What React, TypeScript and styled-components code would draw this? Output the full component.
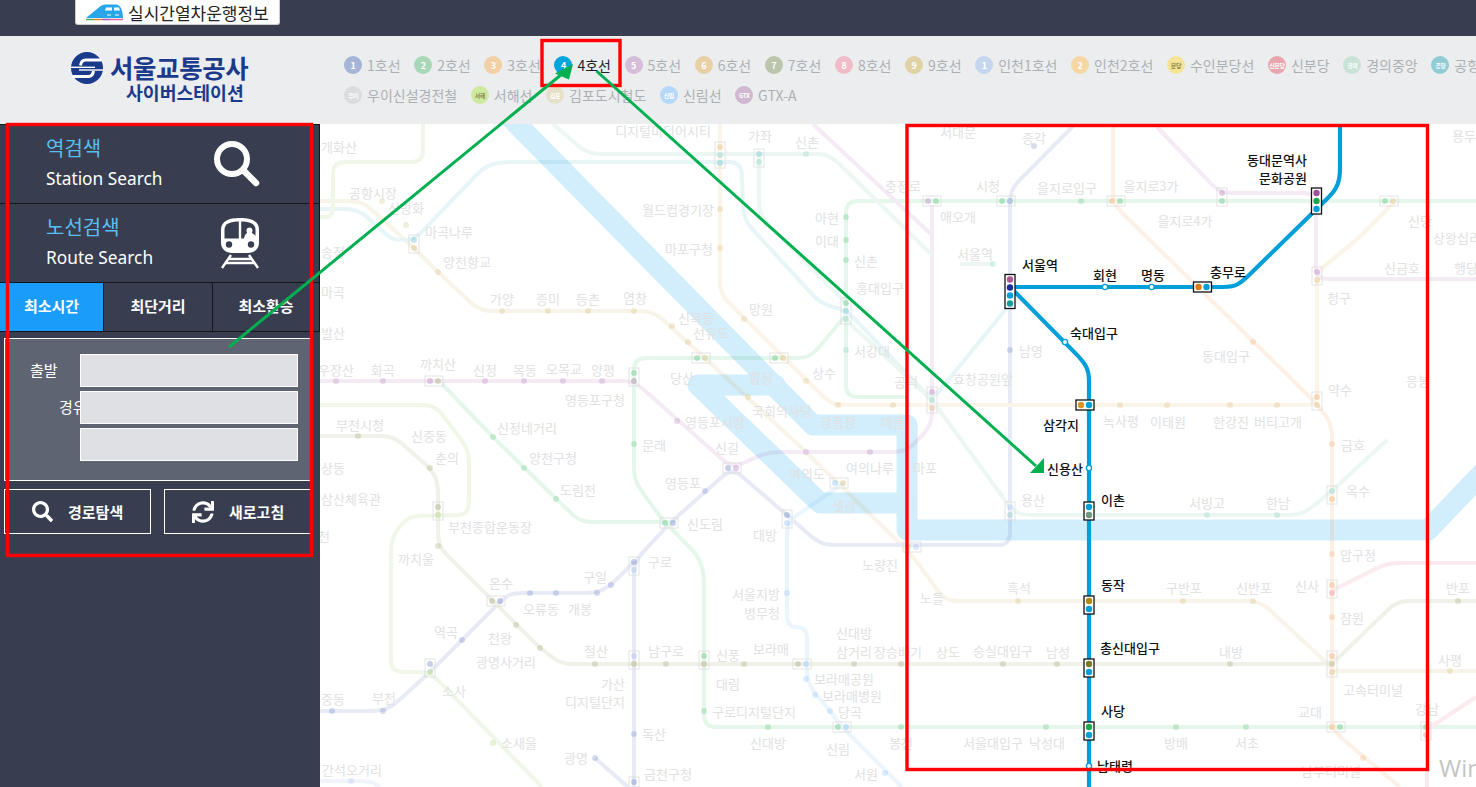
import React from 'react';
import styled, { createGlobalStyle } from 'styled-components';
import { FaSearch, FaSync } from 'react-icons/fa';

const GlobalStyle = createGlobalStyle`
  html, body {
    margin: 0;
    padding: 0;
    height: 100%;
    overflow: hidden;
    background: #fff;
    font-family: "Noto Sans CJK KR", "Noto Sans", sans-serif;
  }
`;

const C = {
  l1: '#3a55b0', l2: '#22b04f', l3: '#ef8a2c', l4: '#00a0dc', l5: '#a050a8', l6: '#d6a040',
  l7: '#7c8438', l9: '#c9a23e', air: '#2fa8c0', gj: '#5cc0a0', sh: '#7cc040', sl: '#55aaf5', bd: '#e8506c', etc: '#8aa4ea',
};

type Pt = [number, number];

// polyline with rounded corners
const rounded = (pts: Pt[], r = 12) => {
  let d = `M${pts[0][0]} ${pts[0][1]}`;
  for (let i = 1; i < pts.length - 1; i++) {
    const [x, y] = pts[i];
    const [px, py] = pts[i - 1];
    const [nx, ny] = pts[i + 1];
    const l1 = Math.hypot(px - x, py - y);
    const l2 = Math.hypot(nx - x, ny - y);
    const a = Math.min(r, l1 / 2) / l1;
    const b = Math.min(r, l2 / 2) / l2;
    d += `L${x + (px - x) * a} ${y + (py - y) * a}Q${x} ${y} ${x + (nx - x) * b} ${y + (ny - y) * b}`;
  }
  const e = pts[pts.length - 1];
  return d + `L${e[0]} ${e[1]}`;
};

const LINES: { c: string; pts: Pt[] }[] = [
  { c: C.l9, pts: [[320, 201], [362, 201], [414, 248], [438, 272], [480, 311], [653, 311], [705, 358], [806, 452], [912, 555], [945, 601], [1260, 601], [1328, 664], [1332, 671], [1476, 671]] },
  { c: C.l1, pts: [[1075, 124], [1010, 190], [1010, 545], [821, 545], [787, 515], [732, 468], [670, 523], [634, 562], [634, 787]] },
  { c: C.l1, pts: [[634, 562], [611, 585], [597, 593], [511, 593], [501, 601], [430, 672], [396, 703], [383, 711], [320, 711]] },
  { c: C.l1, pts: [[595, 758], [628, 787]] },
  { c: C.l2, pts: [[1476, 201], [846, 201], [846, 397], [906, 397]] },
  { c: C.l2, pts: [[846, 315], [810, 358], [634, 358], [634, 480], [660, 517], [699, 557], [704, 575], [704, 727], [1476, 727]] },
  { c: C.l2, pts: [[442, 384], [493, 437], [580, 522], [670, 522]] },
  { c: C.l7, pts: [[320, 436], [393, 436], [430, 468], [438, 482], [438, 546], [540, 648], [561, 664], [1332, 664], [1397, 601], [1476, 601]] },
  { c: C.l3, pts: [[1113, 124], [1113, 204], [1317, 404], [1332, 424], [1332, 730], [1400, 787]] },
  { c: C.l6, pts: [[720, 124], [720, 294], [829, 402], [838, 405], [1317, 405], [1317, 272], [1360, 237], [1395, 201]] },
  { c: C.l5, pts: [[320, 381], [634, 381], [732, 468], [768, 452], [906, 452], [932, 425], [932, 205]] },
  { c: C.l5, pts: [[813, 124], [932, 235]] },
  { c: C.l5, pts: [[1157, 127], [1220, 193], [1316, 193], [1316, 279], [1476, 279]] },
  { c: C.air, pts: [[320, 209], [358, 209], [389, 237], [396, 240], [414, 240], [484, 167], [500, 162], [741, 162], [744, 220], [821, 304], [846, 310], [932, 400], [1010, 304]] },
  { c: C.gj, pts: [[553, 124], [588, 154], [829, 154], [932, 255]] },
  { c: C.gj, pts: [[759, 154], [759, 215], [846, 303]] },
  { c: C.gj, pts: [[846, 320], [932, 400], [1010, 507], [1020, 515], [1302, 515], [1332, 491], [1387, 440]] },
  { c: C.gj, pts: [[960, 264], [993, 264]] },
  { c: C.sh, pts: [[423, 124], [423, 162], [333, 162], [333, 217], [320, 217]] },
  { c: C.sh, pts: [[320, 405], [435, 405], [469, 450], [469, 515], [408, 516], [391, 538], [391, 672], [430, 672], [542, 787]] },
  { c: C.sl, pts: [[844, 483], [787, 522], [787, 627], [807, 627], [807, 683], [830, 711], [842, 727], [902, 787]] },
  { c: C.bd, pts: [[1333, 590], [1387, 563], [1476, 563]] },
  { c: C.bd, pts: [[1426, 730], [1476, 697]] },
  { c: C.bd, pts: [[1427, 735], [1427, 787]] },
  { c: C.etc, pts: [[320, 781], [370, 781], [380, 787]] },
];

const STOPS: [string, Pt[]][] = [
  [C.l9, [[438, 272], [502, 311], [548, 311], [588, 311], [634, 311], [672, 326], [688, 342], [748, 397], [1018, 601], [1183, 601], [1253, 601], [1450, 671], [382, 201], [406, 225]]],
  [C.l1, [[1010, 350], [634, 734], [597, 593], [556, 593], [530, 593], [611, 585], [462, 640], [383, 711], [332, 711], [595, 758], [705, 491], [1034, 146]]],
  [C.l2, [[846, 217], [846, 240], [846, 260], [634, 444], [493, 437], [556, 499], [524, 468], [704, 711], [768, 727], [901, 727], [1046, 727], [1176, 727], [1246, 727], [1081, 201]]],
  [C.l7, [[430, 468], [438, 546], [516, 625], [540, 648], [595, 664], [666, 664], [744, 664], [854, 664], [901, 664], [1003, 664], [1057, 664], [1230, 664], [1458, 601], [358, 436]]],
  [C.l3, [[1253, 342], [1332, 444], [1332, 554], [1332, 617], [1363, 758]]],
  [C.l6, [[720, 209], [720, 248], [744, 319], [806, 381], [838, 405], [893, 405], [1120, 405], [1167, 405], [1230, 405], [1277, 405]]],
  [C.l5, [[336, 381], [383, 381], [485, 381], [524, 381], [563, 381], [602, 381], [677, 421], [806, 452], [870, 452], [1010, 304]]],
  [C.gj, [[806, 154], [846, 350], [1207, 515], [1277, 515], [993, 264]]],
  [C.sh, [[493, 743]]],
  [C.sl, [[787, 593], [806, 679], [815, 695], [830, 711], [885, 773]]],
  [C.etc, [[351, 781]]],
];

type Transfer = { x: number; y: number; dir: 'h' | 'v'; dots: string[] };

const PALE_TRANSFERS: Transfer[] = [
  { x: 720, y: 147, dir: 'v', dots: [C.l6, C.gj, C.air] },
  { x: 759, y: 154, dir: 'v', dots: [C.air, C.gj] },
  { x: 414, y: 240, dir: 'v', dots: [C.air, C.l9] },
  { x: 430, y: 381, dir: 'h', dots: [C.l5, C.l7] },
  { x: 634, y: 373, dir: 'v', dots: [C.l2, '#555'] },
  { x: 697, y: 358, dir: 'h', dots: [C.l2, C.l9] },
  { x: 775, y: 358, dir: 'h', dots: [C.l2, C.l9] },
  { x: 846, y: 303, dir: 'v', dots: [C.l2, C.air, C.gj] },
  { x: 728, y: 468, dir: 'h', dots: [C.l1, C.l5] },
  { x: 835, y: 483, dir: 'h', dots: [C.sl, C.l9] },
  { x: 787, y: 515, dir: 'v', dots: [C.l1, C.sl] },
  { x: 665, y: 523, dir: 'h', dots: [C.l2, C.l1] },
  { x: 634, y: 562, dir: 'v', dots: [C.l1, C.etc] },
  { x: 492, y: 601, dir: 'h', dots: [C.l7, C.l1] },
  { x: 430, y: 664, dir: 'v', dots: [C.l1, C.sh] },
  { x: 634, y: 656, dir: 'v', dots: [C.etc, C.l7] },
  { x: 704, y: 656, dir: 'v', dots: [C.l2, C.l7] },
  { x: 798, y: 664, dir: 'h', dots: [C.l7, C.sl] },
  { x: 838, y: 727, dir: 'h', dots: [C.l2, C.sl] },
  { x: 438, y: 507, dir: 'v', dots: [C.l7, C.sh] },
  { x: 908, y: 547, dir: 'h', dots: [C.l9, C.etc] },
  { x: 1002, y: 201, dir: 'h', dots: [C.l2, C.l1] },
  { x: 1112, y: 201, dir: 'h', dots: [C.l3, C.l2] },
  { x: 1222, y: 193, dir: 'v', dots: [C.l5, C.l2] },
  { x: 1317, y: 272, dir: 'v', dots: [C.l5, C.l6] },
  { x: 1317, y: 397, dir: 'v', dots: [C.l3, C.l6] },
  { x: 1332, y: 491, dir: 'v', dots: [C.gj, C.l3] },
  { x: 1010, y: 507, dir: 'v', dots: [C.etc, C.gj] },
  { x: 1332, y: 585, dir: 'v', dots: [C.l3, C.bd] },
  { x: 1332, y: 656, dir: 'v', dots: [C.l3, C.l7, C.l9] },
  { x: 1332, y: 727, dir: 'h', dots: [C.l3, C.l2] },
  { x: 1426, y: 727, dir: 'v', dots: [C.l2, C.bd] },
  { x: 932, y: 392, dir: 'v', dots: [C.l5, C.gj, C.l6] },
  { x: 928, y: 201, dir: 'h', dots: [C.l5, C.l2] },
  { x: 1385, y: 201, dir: 'h', dots: [C.l2, C.l6] },
  { x: 634, y: 782, dir: 'v', dots: [C.l1] },
];

const MAIN_TRANSFERS: Transfer[] = [
  { x: 1010, y: 279.5, dir: 'v', dots: ['#a85a91', '#1b2f9a', '#009fd9', '#169a9a'] },
  { x: 1198.5, y: 287, dir: 'h', dots: ['#e07a10', '#009fd9'] },
  { x: 1316.5, y: 193, dir: 'v', dots: ['#a1509a', '#1fa84a', '#009fd9'] },
  { x: 1081, y: 405, dir: 'h', dots: ['#d8961f', '#009fd9'] },
  { x: 1089, y: 507, dir: 'v', dots: ['#009fd9', '#6e9a80'] },
  { x: 1089, y: 601, dir: 'v', dots: ['#b38a10', '#009fd9'] },
  { x: 1089, y: 664, dir: 'v', dots: ['#7a7a25', '#009fd9'] },
  { x: 1089, y: 727, dir: 'v', dots: ['#1ea84a', '#009fd9'] },
];

const PALE_LABELS: [string, number, number][] = [
  ['개화산', 339, 146], ['공항시장', 373, 192], ['신방화', 406, 207], ['마곡나루', 449, 231], ['양천향교', 467, 261],
  ['송정', 333, 251], ['마곡', 333, 291], ['발산', 333, 332], ['가양', 502, 298], ['증미', 548, 298], ['등촌', 588, 298],
  ['염창', 635, 297], ['신목동', 696, 317], ['선유도', 711, 332], ['망원', 761, 308], ['월드컵경기장', 678, 209],
  ['마포구청', 689, 248], ['디지털미디어시티', 663, 130], ['가좌', 760, 135], ['신촌', 807, 141], ['충정로', 903, 185],
  ['아현', 827, 217], ['이대', 827, 240], ['신촌', 866, 260], ['홍대입구', 880, 287], ['서강대', 872, 350], ['상수', 824, 372],
  ['합정', 761, 377], ['당산', 682, 377], ['우장산', 336, 369], ['화곡', 383, 369], ['까치산', 438, 363], ['신정', 485, 369],
  ['목동', 525, 369], ['오목교', 564, 368], ['양평', 603, 369], ['영등포구청', 595, 399], ['부천시청', 360, 424],
  ['신중동', 429, 435], ['신정네거리', 527, 427], ['영등포시장', 715, 421], ['국회의사당', 782, 410], ['광흥창', 838, 421],
  ['대흥', 893, 421], ['공덕', 906, 381], ['문래', 654, 444], ['신길', 727, 447], ['양천구청', 553, 457], ['춘의', 447, 457],
  ['상동', 333, 467], ['삼산체육관', 351, 498], ['부천종합운동장', 490, 526], ['천', 324, 535], ['까치울', 416, 558],
  ['온수', 501, 582], ['오류동', 541, 608], ['개봉', 580, 608], ['구일', 595, 576], ['구로', 660, 561], ['역곡', 446, 631],
  ['천왕', 500, 637], ['광명사거리', 506, 661], ['소사', 454, 690], ['철산', 596, 650], ['남구로', 666, 650], ['신풍', 728, 654],
  ['보라매', 771, 648], ['대림', 728, 683], ['가산', 613, 683], ['디지털단지', 595, 701], ['중동', 333, 698], ['부천', 384, 697],
  ['소새울', 519, 742], ['독산', 654, 733], ['광명', 576, 757], ['금천구청', 668, 773], ['간석오거리', 352, 769],
  ['구로디지털단지', 754, 711], ['신대방', 768, 742], ['신림', 838, 748], ['봉천', 901, 742], ['서원', 866, 773],
  ['보라매공원', 844, 678], ['보라매병원', 852, 695], ['당곡', 850, 711], ['신대방', 854, 632], ['삼거리', 854, 651],
  ['장승배기', 898, 651], ['서울지방', 756, 593], ['병무청', 762, 612], ['대방', 765, 534], ['신도림', 705, 523],
  ['영등포', 683, 482], ['도림천', 578, 489], ['여의도', 807, 473], ['여의나루', 870, 467], ['샛강', 844, 505],
  ['노량진', 880, 564], ['마포', 925, 467], ['종각', 1034, 137], ['시청', 988, 185], ['을지로입구', 1067, 187],
  ['을지로3가', 1151, 185], ['을지로4가', 1185, 220], ['서울역', 975, 253], ['남영', 1031, 350], ['동대입구', 1226, 355],
  ['효창공원앞', 983, 378], ['녹사평', 1121, 420], ['이태원', 1168, 421], ['한강진', 1231, 421], ['버티고개', 1278, 421],
  ['청구', 1339, 297], ['약수', 1340, 389], ['금호', 1353, 444], ['옥수', 1358, 490], ['용산', 1033, 499], ['서빙고', 1207, 502],
  ['한남', 1278, 502], ['압구정', 1358, 554], ['흑석', 1019, 587], ['구반포', 1184, 587], ['신반포', 1254, 587], ['신사', 1307, 585],
  ['반포', 1458, 587], ['잠원', 1352, 617], ['숭실대입구', 1003, 650], ['남성', 1058, 651], ['내방', 1231, 651], ['사평', 1450, 659],
  ['고속터미널', 1373, 689], ['교대', 1310, 711], ['강남', 1427, 708], ['서울대입구', 993, 742], ['낙성대', 1047, 742],
  ['방배', 1176, 742], ['서초', 1247, 742], ['남부터미널', 1331, 770], ['노들', 932, 597], ['상도', 948, 651], ['애오개', 958, 216],
  ['서대문', 958, 131], ['용두', 1464, 135], ['신당', 1420, 220], ['상왕십리', 1457, 237], ['신금호', 1402, 267], ['행당', 1466, 267],
  ['응봉', 1418, 380],
];

const MAIN_LABELS: [string, number, number][] = [
  ['동대문역사', 1277, 159], ['문화공원', 1283, 177], ['서울역', 1040, 264], ['회현', 1105, 274], ['명동', 1153, 274],
  ['충무로', 1228, 271], ['숙대입구', 1094, 332], ['삼각지', 1061, 424], ['신용산', 1065, 468], ['이촌', 1113, 499],
  ['동작', 1113, 584], ['총신대입구', 1130, 647], ['사당', 1113, 710], ['남태령', 1115, 765],
];

const NAV_ROW1 = [
  { mark: '1', name: '1호선', color: '#a6b4d6' },
  { mark: '2', name: '2호선', color: '#a8d8b8' },
  { mark: '3', name: '3호선', color: '#f2cfa5' },
  { mark: '4', name: '4호선', color: '#00a5de', active: true },
  { mark: '5', name: '5호선', color: '#d5bcd8' },
  { mark: '6', name: '6호선', color: '#e8cfa6' },
  { mark: '7', name: '7호선', color: '#bcc4ac' },
  { mark: '8', name: '8호선', color: '#efbcc8' },
  { mark: '9', name: '9호선', color: '#e0d2a5' },
  { mark: '1', name: '인천1호선', color: '#c6d6ef' },
  { mark: '2', name: '인천2호선', color: '#f5d6a5' },
  { mark: '분당', name: '수인분당선', color: '#f5e495', tiny: true, dark: true },
  { mark: '신분당', name: '신분당', color: '#e8a5ad', tiny: true },
  { mark: '경의', name: '경의중앙', color: '#c8e2d6', tiny: true },
  { mark: '공항', name: '공항철도', color: '#90cbd6', tiny: true },
];

const NAV_ROW2 = [
  { mark: '우이', name: '우이신설경전철', color: '#dcdcdc', tiny: true },
  { mark: '서해', name: '서해선', color: '#cfe8a0', tiny: true, dark: true },
  { mark: '김포', name: '김포도시철도', color: '#e6e0c8', tiny: true },
  { mark: '신림', name: '신림선', color: '#b5d8f8', tiny: true },
  { mark: 'GTX', name: 'GTX-A', color: '#d0b8d0', tiny: true },
];

const Page = styled.div`
  position: relative;
  width: 1476px;
  height: 787px;
  overflow: hidden;
  display: flex;
  flex-direction: column;
`;

const TopBar = styled.div`
  height: 36px;
  flex: none;
  background: #383e50;
  padding-left: 75px;
`;

const LiveButton = styled.div`
  width: 205px;
  height: 25px;
  box-sizing: border-box;
  background: #fff;
  border: 1px solid #ccc;
  border-top: 0;
  border-radius: 0 0 3px 3px;
  display: flex;
  align-items: center;
  gap: 5px;
  padding-left: 10px;
  font-size: 17px;
  color: #222;
  white-space: nowrap;
`;

const Header = styled.div`
  height: 88px;
  flex: none;
  background: #ebedef;
  display: flex;
  overflow: hidden;
`;

const LogoArea = styled.div`
  width: 344px;
  flex: none;
  padding: 16px 0 0 70px;
  box-sizing: border-box;
  display: flex;
  gap: 6px;
`;

const LogoText = styled.div`
  color: #1b3a8c;
  font-weight: 700;
  line-height: 1;
`;

const LogoMain = styled.div`
  font-size: 25.4px;
  line-height: 30px;
  letter-spacing: -0.3px;
  white-space: nowrap;
`;

const LogoSub = styled.div`
  font-size: 18.3px;
  line-height: 20px;
  margin-left: 16px;
  white-space: nowrap;
`;

const LineNav = styled.nav`
  flex: 1;
  min-width: 0;
  padding-top: 20px;
`;

const NavRow = styled.div`
  height: 30px;
  display: flex;
  align-items: flex-start;
  gap: 13.6px;
  white-space: nowrap;
`;

const NavItem = styled.div<{ $active?: boolean }>`
  display: flex;
  align-items: center;
  gap: 5px;
  height: 18px;
  flex: none;
  font-size: 14px;
  color: ${(p) => (p.$active ? '#222' : '#adb0b3')};
`;

const NavDot = styled.span<{ $color: string; $tiny?: boolean; $dark?: boolean }>`
  width: 18px;
  height: 18px;
  border-radius: 50%;
  background: ${(p) => p.$color};
  display: flex;
  align-items: center;
  justify-content: center;
  color: ${(p) => (p.$dark ? '#8a8a50' : '#fff')};
  font-size: ${(p) => (p.$tiny ? '6px' : '9px')};
  font-weight: 700;
  letter-spacing: -0.4px;
  overflow: hidden;
`;

const Main = styled.div`
  flex: 1;
  min-height: 0;
  display: flex;
`;

const Sidebar = styled.aside`
  width: 320px;
  flex: none;
  background: #383e50;
  border-top: 1px solid #14161c;
  box-sizing: border-box;
  color: #fff;
`;

const SearchRow = styled.div`
  height: 79px;
  box-sizing: border-box;
  border-bottom: 1px solid #14161c;
  border-right: 1px solid #14161c;
  display: flex;
  align-items: center;
  justify-content: space-between;
  padding: 0 59px 0 46px;
`;

const SearchTitle = styled.div`
  color: #58bff2;
  font-size: 20px;
  line-height: 26px;
`;

const SearchSub = styled.div`
  color: #fff;
  font-family: "Noto Sans", sans-serif;
  font-size: 17.3px;
  line-height: 28px;
  margin-top: 4px;
`;

const Tabs = styled.div`
  display: flex;
  height: 49px;
  box-sizing: border-box;
  border-bottom: 1px solid #14161c;
`;

const Tab = styled.div<{ $active?: boolean; $width: number }>`
  width: ${(p) => p.$width}px;
  box-sizing: border-box;
  flex: none;
  border-right: 1px solid #14161c;
  background: ${(p) => (p.$active ? '#1a9cfb' : '#383e50')};
  font-size: 15px;
  font-weight: 700;
  padding-bottom: 4px;
  display: flex;
  align-items: center;
  justify-content: center;
`;

const RouteForm = styled.div`
  margin: 6px 8px 0 4px;
  height: 143px;
  box-sizing: border-box;
  border: 1px solid #fff;
  background: #5f6473;
  padding-top: 15px;
  display: flex;
  flex-direction: column;
  gap: 4px;
`;

const FormRow = styled.div`
  display: flex;
  height: 33px;
`;

const FormLabel = styled.div<{ $indent: number }>`
  width: 75px;
  flex: none;
  box-sizing: border-box;
  padding-left: ${(p) => p.$indent}px;
  overflow: hidden;
  white-space: nowrap;
  font-size: 15px;
  line-height: 31px;
`;

const FormInput = styled.input`
  width: 218px;
  height: 33px;
  box-sizing: border-box;
  border: 1px solid #fff;
  border-radius: 0;
  background: #dfe0e3;
  padding: 0;
  outline: none;
`;

const ButtonRow = styled.div`
  margin: 8px 8px 0 4px;
  display: flex;
  gap: 13px;
`;

const ActionButton = styled.div<{ $grow?: boolean }>`
  height: 45px;
  box-sizing: border-box;
  border: 1px solid #fff;
  width: 147px;
  flex: ${(p) => (p.$grow ? 1 : 'none')};
  display: flex;
  align-items: center;
  padding-left: 27px;
  gap: 15px;
  font-size: 15px;
  font-weight: 700;
`;

const MapArea = styled.div`
  flex: 1;
  min-width: 0;
  background: #fff;
  overflow: hidden;
`;

const MapSvg = styled.svg`
  display: block;
  font-family: "Noto Sans CJK KR", sans-serif;
  text {
    text-anchor: middle;
    dominant-baseline: central;
  }
`;

const PaleText = styled.g`
  fill: #e1e1e2;
  font-size: 13px;
`;

const StrongText = styled.g`
  fill: #111;
  font-size: 13px;
  font-weight: 500;
`;

const Overlay = styled.svg`
  position: absolute;
  left: 0;
  top: 0;
  pointer-events: none;
`;

const TransferBox = ({ t, strong }: { t: Transfer; strong?: boolean }) => {
  const len = 8 * (t.dots.length - 1);
  const w = t.dir === 'h' ? len + 10 : 10;
  const h = t.dir === 'h' ? 10 : len + 10;
  return (
    <g>
      <rect
        x={t.x - 5}
        y={t.y - 5}
        width={w}
        height={h}
        fill={strong ? '#fff' : 'none'}
        stroke={strong ? '#111' : '#d8d8d8'}
        strokeWidth={strong ? 1.3 : 1}
        opacity={strong ? 1 : 0.7}
      />
      {t.dots.map((c, i) => (
        <circle
          key={i}
          cx={t.dir === 'h' ? t.x + i * 8 : t.x}
          cy={t.dir === 'v' ? t.y + i * 8 : t.y}
          r={strong ? 3.2 : 3}
          fill={c}
          opacity={strong ? 1 : 0.28}
        />
      ))}
    </g>
  );
};

const SubwayMap = () => (
  <MapSvg width={1156} height={663} viewBox="320 124 1156 663">
    <g fill="none" stroke="#d2edfb" strokeWidth={21} strokeLinejoin="round" strokeLinecap="round">
      <path d="M507 114L813 425L907 425L907 530L1428 530L1490 465" />
      <path d="M775 385L698 385L820 503L907 503" />
    </g>
    <g fill="none" strokeWidth={4} opacity={0.11}>
      {LINES.map((l, i) => (
        <path key={i} d={rounded(l.pts)} stroke={l.c} />
      ))}
    </g>
    <g opacity={0.2}>
      {STOPS.map(([c, pts]) => pts.map((p, i) => <circle key={c + i} cx={p[0]} cy={p[1]} r={3} fill={c} />))}
    </g>
    {PALE_TRANSFERS.map((t, i) => (
      <TransferBox key={i} t={t} />
    ))}
    <PaleText>
      {PALE_LABELS.map(([s, x, y], i) => (
        <text key={i} x={x} y={y}>{s}</text>
      ))}
    </PaleText>
    <path
      d={rounded([[1340, 124], [1340, 178], [1335, 191], [1243, 281], [1233, 287], [1010, 287]], 10)}
      fill="none"
      stroke="#009fd9"
      strokeWidth={4.2}
    />
    <path
      d={rounded([[1012, 289], [1083, 361], [1089, 372], [1089, 787]], 10)}
      fill="none"
      stroke="#009fd9"
      strokeWidth={4.2}
    />
    {[[1105, 287], [1151.6, 287], [1065, 342], [1089, 468], [1089, 766]].map(([x, y]) => (
      <circle key={x + y} cx={x} cy={y} r={2.6} fill="#fff" stroke="#009fd9" strokeWidth={1.4} />
    ))}
    {MAIN_TRANSFERS.map((t, i) => (
      <TransferBox key={i} t={t} strong />
    ))}
    <StrongText>
      {MAIN_LABELS.map(([s, x, y], i) => (
        <text key={i} x={x} y={y}>{s}</text>
      ))}
    </StrongText>
    <text x={1439} y={767} fontFamily="Open Sans, sans-serif" fontSize={24} fill="#c4c4c4" style={{ textAnchor: 'start' }}>Windows</text>
  </MapSvg>
);

const LogoMark = () => (
  <svg width={34} height={32} viewBox="0 0 34 32">
    <circle cx={17} cy={16} r={16} fill="#1b3a8c" />
    <g fill="none" stroke="#fff">
      <path d="M31.5 8H15.5C12.5 8 11 10 10.5 13.5" strokeWidth={3} />
      <path d="M1 15.3H25" strokeWidth={1.4} />
      <path d="M2.5 24.5H18.5C21.5 24.5 23 22.5 23.5 19" strokeWidth={3} />
      <path d="M9 18H33" strokeWidth={1.4} />
    </g>
  </svg>
);

const TrainMark = () => (
  <svg width={37} height={18} viewBox="0 0 37 18">
    <path d="M0 15L14 3.5C16 2 18 1.5 20 1.5H30C33.5 1.5 36.5 5 37 15Z" fill="#27a7e7" />
    <path d="M20 4.5H26V7.5H19Z M28 4.5H33L34 7.5H28Z" fill="#fff" />
    <path d="M21 12H25M29 12H33" stroke="#fff" strokeWidth={1} />
    <path d="M0 16.5H8" stroke="#4caf50" strokeWidth={1.5} />
    <path d="M8 16.5H16" stroke="#e8822c" strokeWidth={1.5} />
    <path d="M16 16.5H24" stroke="#9c5ab0" strokeWidth={1.5} />
    <path d="M24 16.5H37" stroke="#e8609c" strokeWidth={1.5} />
  </svg>
);

const BigSearchIcon = () => (
  <svg width={46} height={46} viewBox="0 0 46 46">
    <circle cx={18} cy={18} r={15} fill="none" stroke="#fff" strokeWidth={6} />
    <path d="M30 30L42 42" stroke="#fff" strokeWidth={6.5} strokeLinecap="round" />
  </svg>
);

const RouteIcon = () => (
  <svg width={40} height={52} viewBox="0 0 40 52">
    <path
      d="M20 1C9 1 1.5 4 1 12V26C1 32 6 36 12 36H28C34 36 39 32 39 26V12C38.500 4 31 1 20 1Z"
      fill="#fff"
    />
    <path d="M18.800 4.500C11 4.500 4.500 6.500 4.500 12.500V21.500H18.800Z" fill="#383e50" />
    <path d="M21.200 4.500V21.500H24C24.500 18 26 16.500 27.200 16C25.700 13.500 26.700 10.500 29.500 10.500C32.300 10.500 33.300 13.500 31.800 16C33 16.500 35 17.500 35.500 19V12.500C35.500 6.500 29 4.500 21.200 4.500Z" fill="#383e50" />
    <circle cx={9} cy={27.5} r={3.2} fill="#383e50" />
    <circle cx={31} cy={27.5} r={3.2} fill="#383e50" />
    <path d="M11 38L2 51M29 38L38 51M8.500 42H31.500M6 46H34" stroke="#fff" strokeWidth={2.4} fill="none" />
  </svg>
);

export default function App() {
  return (
    <Page>
      <GlobalStyle />
      <TopBar>
        <LiveButton>
          <TrainMark />
          실시간열차운행정보
        </LiveButton>
      </TopBar>
      <Header>
        <LogoArea>
          <LogoMark />
          <LogoText>
            <LogoMain>서울교통공사</LogoMain>
            <LogoSub>사이버스테이션</LogoSub>
          </LogoText>
        </LogoArea>
        <LineNav>
          <NavRow>
            {NAV_ROW1.map((n) => (
              <NavItem key={n.name} $active={n.active}>
                <NavDot $color={n.color} $tiny={n.tiny} $dark={n.dark}>{n.mark}</NavDot>
                {n.name}
              </NavItem>
            ))}
          </NavRow>
          <NavRow>
            {NAV_ROW2.map((n) => (
              <NavItem key={n.name}>
                <NavDot $color={n.color} $tiny={n.tiny} $dark={n.dark}>{n.mark}</NavDot>
                {n.name}
              </NavItem>
            ))}
          </NavRow>
        </LineNav>
      </Header>
      <Main>
        <Sidebar>
          <SearchRow>
            <div>
              <SearchTitle>역검색</SearchTitle>
              <SearchSub>Station Search</SearchSub>
            </div>
            <BigSearchIcon />
          </SearchRow>
          <SearchRow>
            <div>
              <SearchTitle>노선검색</SearchTitle>
              <SearchSub>Route Search</SearchSub>
            </div>
            <RouteIcon />
          </SearchRow>
          <Tabs>
            <Tab $active $width={104}>최소시간</Tab>
            <Tab $width={109}>최단거리</Tab>
            <Tab $width={107}>최소환승</Tab>
          </Tabs>
          <RouteForm>
            <FormRow>
              <FormLabel $indent={25}>출발</FormLabel>
              <FormInput />
            </FormRow>
            <FormRow>
              <FormLabel $indent={54}>경유</FormLabel>
              <FormInput />
            </FormRow>
            <FormRow>
              <FormLabel $indent={25} />
              <FormInput />
            </FormRow>
          </RouteForm>
          <ButtonRow>
            <ActionButton>
              <FaSearch size={21} />
              경로탐색
            </ActionButton>
            <ActionButton $grow>
              <FaSync size={22} />
              새로고침
            </ActionButton>
          </ButtonRow>
        </Sidebar>
        <MapArea>
          <SubwayMap />
        </MapArea>
      </Main>
      <Overlay width={1476} height={787} viewBox="0 0 1476 787">
        <g fill="none" stroke="#ff0000" strokeWidth={3.4}>
          <rect x={7.5} y={124.5} width={304} height={431} />
          <rect x={542} y={40.5} width={78} height={45} />
          <rect x={907} y={125.5} width={520.5} height={644} />
        </g>
        <g fill="none" stroke="#00b050" strokeWidth={3}>
          <path d="M229 347L562 74" />
          <path d="M596.5 71L1036 466" />
        </g>
        <g fill="#00b050">
          <path d="M573 64L555 73.5L569 79.5Z" />
          <path d="M1044 473L1030 473L1044 458Z" />
        </g>
      </Overlay>
    </Page>
  );
}
